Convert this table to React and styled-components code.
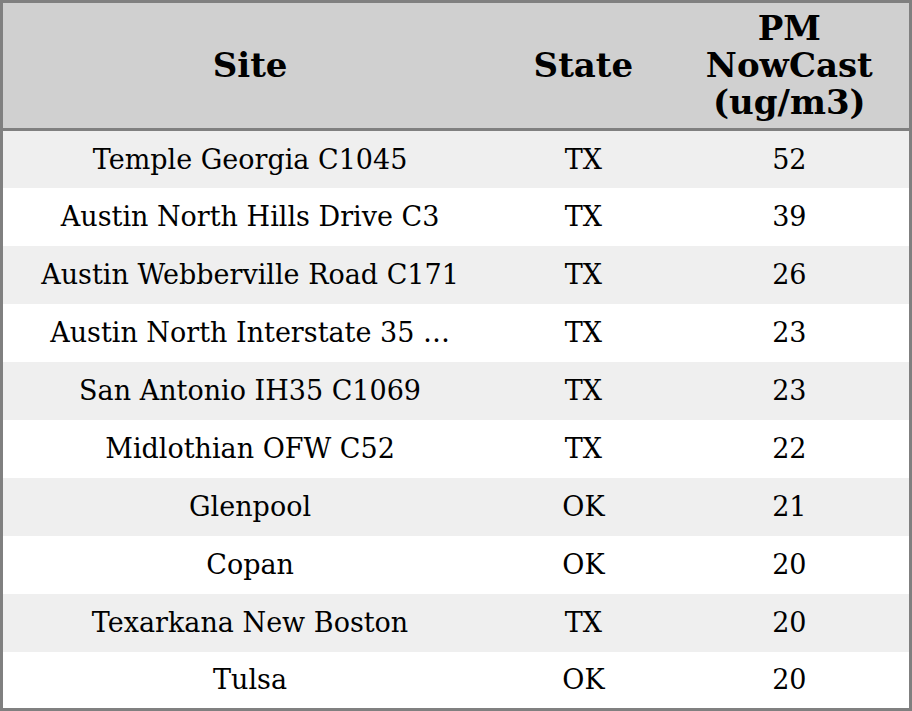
import React from "react";
import styled, { createGlobalStyle } from "styled-components";

const GlobalStyle = createGlobalStyle`
  html, body {
    margin: 0;
    padding: 0;
    background: #fff;
  }
`;

const Table = styled.table`
  width: 912px;
  border-collapse: collapse;
  table-layout: fixed;
  border: 3px solid #808080;
  font-family: "DejaVu Serif", serif;
  color: #000;
`;

const Head = styled.th`
  background: #d0d0d0;
  font-size: 34px;
  font-weight: bold;
  line-height: 37px;
  height: 125px;
  padding: 0 4px;
  text-align: center;
  vertical-align: middle;
  border-bottom: 3px solid #808080;
`;

const Row = styled.tr`
  background: ${(p) => (p.$odd ? "#efefef" : "#ffffff")};
  height: 58px;
`;

const Cell = styled.td`
  font-size: 27px;
  text-align: center;
  vertical-align: middle;
  padding: 0 4px;
  white-space: nowrap;
  overflow: hidden;
`;

const rows = [
  ["Temple Georgia C1045", "TX", 52],
  ["Austin North Hills Drive C3", "TX", 39],
  ["Austin Webberville Road C171", "TX", 26],
  ["Austin North Interstate 35 …", "TX", 23],
  ["San Antonio IH35 C1069", "TX", 23],
  ["Midlothian OFW C52", "TX", 22],
  ["Glenpool", "OK", 21],
  ["Copan", "OK", 20],
  ["Texarkana New Boston", "TX", 20],
  ["Tulsa", "OK", 20],
];

export default function App() {
  return (
    <>
      <GlobalStyle />
      <Table>
        <colgroup>
          <col style={{ width: 494 }} />
          <col style={{ width: 172 }} />
          <col style={{ width: 240 }} />
        </colgroup>
        <thead>
          <tr>
            <Head>Site</Head>
            <Head>State</Head>
            <Head>
              PM
              <br />
              NowCast
              <br />
              (ug/m3)
            </Head>
          </tr>
        </thead>
        <tbody>
          {rows.map((r, i) => (
            <Row key={i} $odd={i % 2 === 0}>
              <Cell>{r[0]}</Cell>
              <Cell>{r[1]}</Cell>
              <Cell>{r[2]}</Cell>
            </Row>
          ))}
        </tbody>
      </Table>
    </>
  );
}
